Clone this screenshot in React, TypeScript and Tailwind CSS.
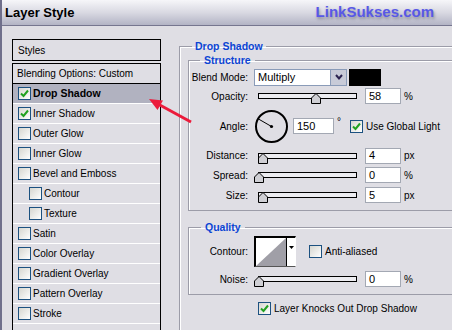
import React from 'react';

const font = "font-['Liberation_Sans',Arial,sans-serif]";

const Check = ({ checked = false }: { checked?: boolean }) => (
  <span className="w-[13px] h-[13px] shrink-0 border border-[#1c5180] bg-gradient-to-br from-[#d6d6d0] to-white flex items-center justify-center">
    {checked && (
      <svg width="9" height="9" viewBox="0 0 9 9">
        <path d="M1 4.5 L3.5 7 L8 1.5" fill="none" stroke="#21a121" strokeWidth="2" />
      </svg>
    )}
  </span>
);

const Slider = ({ pos }: { pos: number }) => (
  <div className="relative w-[99px] h-[6px] ml-[10px] border border-black bg-[#ececf0] shrink-0">
    {/* thumb sits over the track */}
    <svg className="absolute -top-[1px]" style={{ left: pos - 5 }} width="10" height="11" viewBox="0 0 10 11">
      <path d="M5 0.5 L9.5 5 L9.5 10.5 L0.5 10.5 L0.5 5 Z" fill="#cfcfd4" stroke="#000" />
    </svg>
  </div>
);

const Field = ({ value, w = 'w-[36px]' }: { value: string; w?: string }) => (
  <div className={`${w} h-[16px] ml-[8px] bg-white border border-[#a3a8b3] flex items-center pl-[3px] text-[11px] shrink-0`}>
    {value}
  </div>
);

const Label = ({ children }: { children: React.ReactNode }) => (
  <span className="w-[59px] text-right shrink-0">{children}</span>
);

const SliderRow = ({ label, pos, value, unit, h }: { label: string; pos: number; value: string; unit: string; h: string }) => (
  <div className={`flex items-center ${h}`}>
    <Label>{label}</Label>
    <Slider pos={pos} />
    <Field value={value} />
    <span className="ml-[3px]">{unit}</span>
  </div>
);

const styles: { name: string; checked?: boolean; indent?: boolean; active?: boolean }[] = [
  { name: 'Drop Shadow', checked: true, active: true },
  { name: 'Inner Shadow', checked: true },
  { name: 'Outer Glow' },
  { name: 'Inner Glow' },
  { name: 'Bevel and Emboss' },
  { name: 'Contour', indent: true },
  { name: 'Texture', indent: true },
  { name: 'Satin' },
  { name: 'Color Overlay' },
  { name: 'Gradient Overlay' },
  { name: 'Pattern Overlay' },
  { name: 'Stroke' },
];

const groupBox = 'border border-[#9c9ca8] shadow-[inset_1px_1px_0_#fff]';
const legend = 'leading-[14px] font-bold text-[10.5px] text-[#0c45d4]';

export default function App() {
  return (
    <div className={`relative w-[452px] h-[330px] overflow-hidden bg-[#dfdee4] border-l-2 border-[#6f6f8b] text-black text-[10px] ${font}`}>
      {/* Title bar */}
      <div className="h-[26px] flex items-center justify-between bg-gradient-to-b from-[#f6f6f9] via-[#d9d9e2] to-[#b3b4c5] border-b border-[#76768f]">
        <span className="pl-[3px] text-[13px] font-bold">Layer Style</span>
        <span className="pr-[18px] text-[15px] font-bold text-[#5858e6] [text-shadow:1px_2px_3px_rgba(60,60,80,0.45)]">LinkSukses.com</span>
      </div>

      <div className="flex">
        {/* Styles list */}
        <div className="pl-[10px] pt-[13px] w-[159px] shrink-0">
          <div className="h-[22px] border border-black flex items-center pl-[5px]">Styles</div>
          <div className="mt-[2px] border border-black">
            <div className="h-[20px] flex items-center pl-[4px] border-b border-black">Blending Options: Custom</div>
            {styles.map((s) => (
              <div
                key={s.name}
                className={`h-[20px] flex items-center gap-[2px] border-b border-white ${s.indent ? 'pl-[16px]' : 'pl-[5px]'} ${s.active ? 'bg-[#b1b2c0] font-bold text-[10.5px]' : ''}`}
              >
                <Check checked={s.checked} />
                <span>{s.name}</span>
              </div>
            ))}
            <div className="h-[20px]" />
          </div>
        </div>

        {/* Drop Shadow panel */}
        <fieldset className={`ml-[18px] mt-[13px] w-[300px] h-[320px] pl-[8px] shrink-0 ${groupBox}`}>
          <legend className={`${legend} ml-[4px] px-[3px]`}>Drop Shadow</legend>

          <fieldset className={`w-[280px] pt-[1px] pb-[5px] ${groupBox}`}>
            <legend className={`${legend} ml-[11px] px-[4px]`}>Structure</legend>

            <div className="flex items-center h-[18px]">
              <Label>Blend Mode:</Label>
              <div className="ml-[6px] w-[93px] h-[17px] bg-white border border-[#8a9bb8] flex items-center justify-between text-[11px] pl-[3px]">
                <span>Multiply</span>
                <span className="w-[16px] h-full bg-[#c8cbd8] border-l border-[#8a9bb8] flex items-center justify-center">
                  <svg width="10" height="8" viewBox="0 0 10 8">
                    <path d="M2 2 L5 5.5 L8 2" fill="none" stroke="#2b2350" strokeWidth="2" />
                  </svg>
                </span>
              </div>
              <div className="ml-[2px] w-[32px] h-[17px] bg-black" />
            </div>

            <SliderRow label="Opacity:" pos={57} value="58" unit="%" h="h-[20px]" />

            <div className="flex items-center h-[40px]">
              <Label>Angle:</Label>
              <svg className="ml-[7px] shrink-0" width="33" height="33" viewBox="0 0 33 33">
                <circle cx="16.5" cy="16.5" r="15.5" fill="none" stroke="#000" strokeWidth="2" />
                <line x1="16.5" y1="16.5" x2="3.5" y2="9" stroke="#000" strokeWidth="1" />
                <circle cx="16.5" cy="16.5" r="1.6" fill="#000" />
              </svg>
              <div className="ml-[5px] w-[41px] h-[16px] bg-white border border-[#a3a8b3] flex items-center pl-[3px] text-[11px]">150</div>
              <span className="ml-[3px] mb-[10px]">°</span>
              <span className="ml-[9px]"><Check checked /></span>
              <span className="ml-[3px]">Use Global Light</span>
            </div>

            <SliderRow label="Distance:" pos={4} value="4" unit="px" h="h-[19px]" />
            <SliderRow label="Spread:" pos={0} value="0" unit="%" h="h-[20px]" />
            <SliderRow label="Size:" pos={4} value="5" unit="px" h="h-[20px]" />
          </fieldset>

          <fieldset className={`mt-[9px] w-[280px] pb-[6px] ${groupBox}`}>
            <legend className={`${legend} ml-[12px] px-[4px]`}>Quality</legend>

            <div className="flex items-center h-[31px] mt-[2px]">
              <Label>Contour:</Label>
              <div className="ml-[6px] w-[42px] h-[31px] flex border-t-2 border-l-2 border-black border-b border-r border-b-[#555] border-r-white bg-white">
                <svg width="30" height="28" viewBox="0 0 30 28" className="shrink-0">
                  <path d="M0 28 L30 0 L30 28 Z" fill="#a09fa7" />
                </svg>
                <span className="flex-1 border-l border-black flex items-start justify-center pt-[8px]">
                  <svg width="5" height="3" viewBox="0 0 5 3">
                    <path d="M0 0 L5 0 L2.5 3 Z" fill="#000" />
                  </svg>
                </span>
              </div>
              <span className="ml-[13px]"><Check /></span>
              <span className="ml-[3px]">Anti-aliased</span>
            </div>

            <div className="mt-[3px]">
              <SliderRow label="Noise:" pos={0} value="0" unit="%" h="h-[18px]" />
            </div>
          </fieldset>

          <div className="flex items-center h-[14px] mt-[6px] ml-[70px]">
            <Check checked />
            <span className="ml-[3px]">Layer Knocks Out Drop Shadow</span>
          </div>
        </fieldset>
      </div>

      {/* annotation arrow over the panel */}
      <svg className="absolute left-0 top-0 pointer-events-none" width="452" height="330" viewBox="0 0 452 330">
        <line x1="189" y1="122" x2="156" y2="104" stroke="#ec1b3b" strokeWidth="3" />
        <path d="M147 99 L161 100.5 L155.5 110 Z" fill="#ec1b3b" />
      </svg>
    </div>
  );
}
